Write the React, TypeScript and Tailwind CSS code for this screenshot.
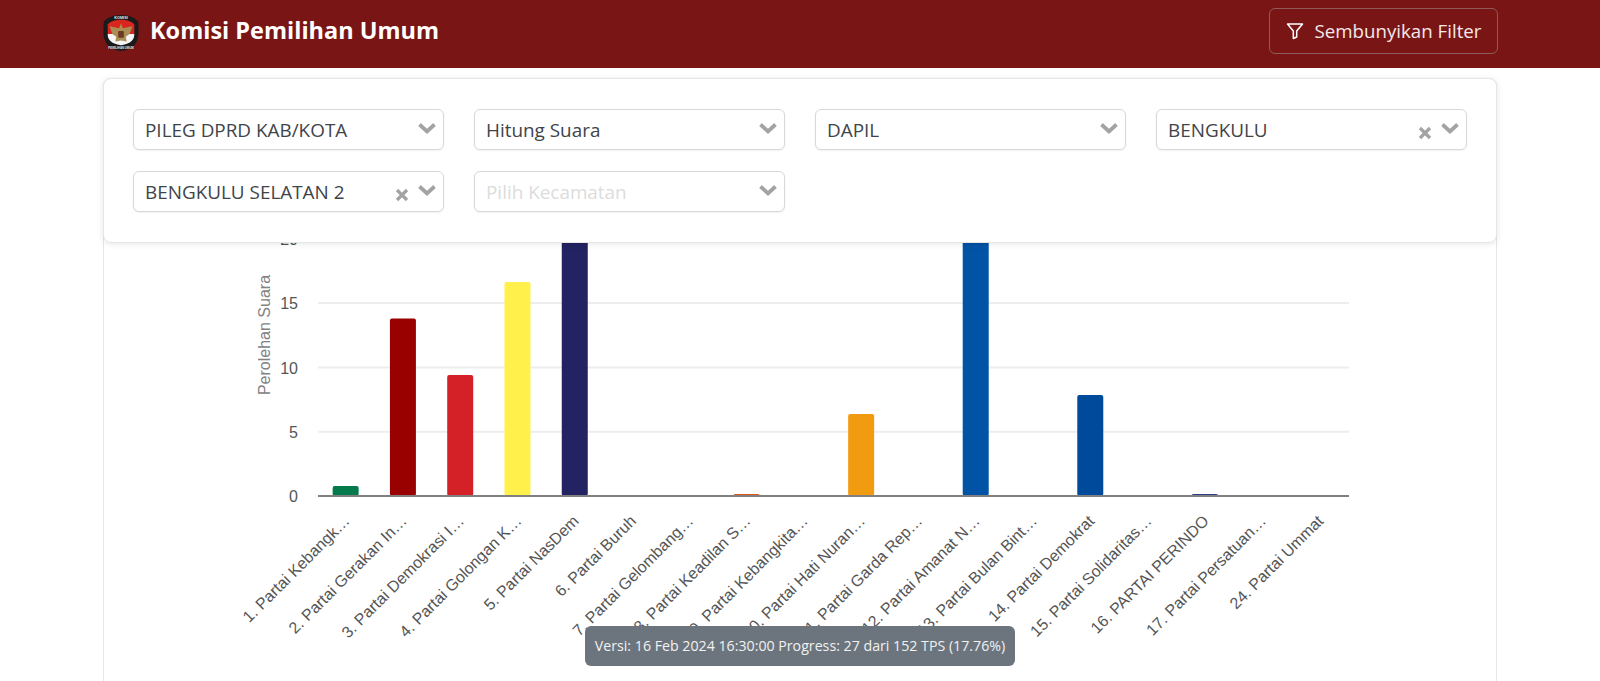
import React from "react";

const bars: { label: string; top: number; color: string }[] = [
  { label: "1. Partai Kebangk…", top: 486, color: "#047a4c" },
  { label: "2. Partai Gerakan In…", top: 318.5, color: "#990000" },
  { label: "3. Partai Demokrasi I…", top: 375, color: "#d42027" },
  { label: "4. Partai Golongan K…", top: 282, color: "#fff04c" },
  { label: "5. Partai NasDem", top: 200, color: "#232262" },
  { label: "6. Partai Buruh", top: 496, color: "#990000" },
  { label: "7. Partai Gelombang…", top: 496, color: "#990000" },
  { label: "8. Partai Keadilan S…", top: 494, color: "#e2571e" },
  { label: "9. Partai Kebangkita…", top: 496, color: "#990000" },
  { label: "10. Partai Hati Nuran…", top: 414, color: "#f09b10" },
  { label: "11. Partai Garda Rep…", top: 496, color: "#990000" },
  { label: "12. Partai Amanat N…", top: 200, color: "#0053a5" },
  { label: "13. Partai Bulan Bint…", top: 496, color: "#990000" },
  { label: "14. Partai Demokrat", top: 395, color: "#004a9c" },
  { label: "15. Partai Solidaritas…", top: 496, color: "#990000" },
  { label: "16. PARTAI PERINDO", top: 494, color: "#2c3f8f" },
  { label: "17. Partai Persatuan…", top: 496, color: "#990000" },
  { label: "24. Partai Ummat", top: 496, color: "#990000" },
];

const X0 = 317;
const STEP = 57.28;
const BASE = 496;

function Chart() {
  const font = "'Liberation Sans', Arial, sans-serif";
  return (
    <svg viewBox="104 79 1392 602" width={1392} height={602} className="block">
      {[[303, "15"], [367.5, "10"], [431.7, "5"], [238.5, "20"]].map(([y, t]) => (
        <g key={t as string}>
          <line x1={318} x2={1349} y1={y as number} y2={y as number} stroke="#ededed" strokeWidth={2} />
          <text x={298} y={(y as number) + 6} textAnchor="end" fontSize={16} fontFamily={font} fill="#555555">
            {t}
          </text>
        </g>
      ))}
      <text x={298} y={502} textAnchor="end" fontSize={16} fontFamily={font} fill="#555555">
        0
      </text>
      <text
        x={270}
        y={335}
        textAnchor="middle"
        fontSize={16}
        fontFamily={font}
        fill="#828282"
        transform="rotate(-90 270 335)"
      >
        Perolehan Suara
      </text>
      {bars.map((b, i) => {
        const cx = X0 + STEP * (i + 0.5);
        return (
          <g key={b.label}>
            {b.top < BASE && (
              <rect x={cx - 13} y={b.top} width={26} height={BASE - b.top} rx={2} fill={b.color} />
            )}
            <text
              x={cx + 5}
              y={522}
              textAnchor="end"
              fontSize={16}
              fontFamily={font}
              fill="#555555"
              transform={`rotate(-45 ${cx + 5} 522)`}
            >
              {b.label}
            </text>
          </g>
        );
      })}
      <line x1={318} x2={1349} y1={BASE} y2={BASE} stroke="#808080" strokeWidth={2} />
    </svg>
  );
}

function Chevron() {
  return (
    <svg width="20" height="14" viewBox="0 0 20 14" className="block">
      <path d="M2.5 3.5 L10 10.5 L17.5 3.5" fill="none" stroke="#a3a3a3" strokeWidth="3.8" />
    </svg>
  );
}

function Cross() {
  return (
    <svg width="14" height="14" viewBox="0 0 14 14" className="block">
      <path d="M2 2 L12 12 M12 2 L2 12" fill="none" stroke="#a3a3a3" strokeWidth="3.2" />
    </svg>
  );
}

function Select({ value, placeholder, clear }: { value?: string; placeholder?: string; clear?: boolean }) {
  return (
    <div className="flex h-[41px] items-center rounded-[6px] border border-[#d8d8d8] bg-white pl-[11px] pr-[6px] shadow-[0_1px_2px_rgba(0,0,0,0.06)]">
      <span className={`flex-1 truncate text-[18.9px] leading-[24px] ${value ? "text-[#3f444a]" : "text-[#dcdcdc]"}`}>
        {value ?? placeholder}
      </span>
      {clear && (
        <span className="mr-[8px] mt-[6px]">
          <Cross />
        </span>
      )}
      <span className="mb-[4px]">
        <Chevron />
      </span>
    </div>
  );
}

function Logo() {
  return (
    <svg width="38" height="38" viewBox="0 0 40 40" className="mt-[4px] block">
      <path d="M20 1 C28 1 35 4 38 8 C39 18 39 27 34 33 C30 37 25 39 20 39 C15 39 10 37 6 33 C1 27 1 18 2 8 C5 4 12 1 20 1 Z" fill="#1a1a1a" />
      <path d="M20 6 C26 6 32 8 34 11 L34 21 L6 21 L6 11 C8 8 14 6 20 6 Z" fill="#d8261f" />
      <path d="M6 21 L34 21 C34 27 31 31 20 33 C9 31 6 27 6 21 Z" fill="#f5f5f5" />
      <path d="M20 10 L22 15 L32 13 L29 21 L25 24 L26 29 L20 28 L14 29 L15 24 L11 21 L8 13 L18 15 Z" fill="#a98f55" />
      <rect x="17" y="18" width="6" height="7" rx="1" fill="#6b3a24" />
      <text x="20" y="5.4" textAnchor="middle" fontSize="4" fontWeight="700" fill="#e8e8e8" fontFamily="'Liberation Sans', sans-serif">KOMISI</text>
      <text x="20" y="36.6" textAnchor="middle" fontSize="3" fontWeight="700" fill="#e8e8e8" fontFamily="'Liberation Sans', sans-serif">PEMILIHAN UMUM</text>
    </svg>
  );
}

export default function App() {
  return (
    <div className="h-[681px] overflow-hidden bg-white font-['Open_Sans',sans-serif]">
      <header className="flex h-[68px] items-center justify-between bg-[#7a1515] pb-[6px] pl-[102px] pr-[102px]">
        <div className="flex items-center gap-[10px]">
          <Logo />
          <span className="text-[23.5px] font-bold text-white">Komisi Pemilihan Umum</span>
        </div>
        <button className="flex h-[46px] w-[229px] items-center justify-center gap-[11px] rounded-[6px] border border-[#8f5a5a] text-[18.7px] text-[#f3e9e9]">
          <svg width="18" height="18" viewBox="0 0 18 18" className="block">
            <path d="M1.5 2 H16.5 L10.7 9 V15 L7.3 16.5 V9 Z" fill="none" stroke="#fff" strokeWidth="1.5" strokeLinejoin="round" />
          </svg>
          Sembunyikan Filter
        </button>
      </header>
      <main className="relative mx-[103px] pt-[10px]">
        <div className="h-[700px] rounded-[8px] border border-[#e6e6e6] bg-white">
          <Chart />
        </div>
        <div className="absolute inset-x-0 top-[10px] grid grid-cols-4 gap-x-[30px] gap-y-[21px] rounded-[8px] border border-[#e6e6e6] bg-white px-[29px] pb-[30px] pt-[30px] shadow-[0_1px_6px_rgba(0,0,0,0.1)]">
          <Select value="PILEG DPRD KAB/KOTA" />
          <Select value="Hitung Suara" />
          <Select value="DAPIL" />
          <Select value="BENGKULU" clear />
          <Select value="BENGKULU SELATAN 2" clear />
          <Select placeholder="Pilih Kecamatan" />
        </div>
      </main>
      <div className="absolute left-[585px] top-[626px] flex h-[40px] w-[430px] items-center justify-center rounded-[6px] bg-[#6c757d] text-[14.2px] text-[#f1f1f1]">
        Versi: 16 Feb 2024 16:30:00 Progress: 27 dari 152 TPS (17.76%)
      </div>
    </div>
  );
}
